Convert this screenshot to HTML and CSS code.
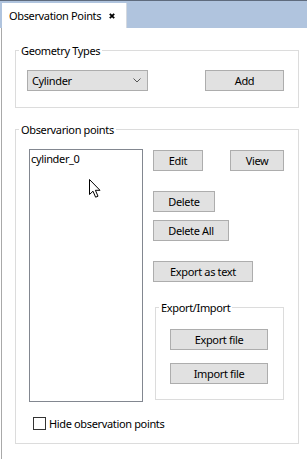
FILE: index.html
```html
<html lang="en">
  <head>
    <meta charset="UTF-8" />
    <meta name="viewport" content="width=device-width, initial-scale=1.0" />
    <title>Observation Points</title>
    <link rel="stylesheet" href="styles.css">
  </head>
  <body>
    <div class="tabbar">
      <div class="tab">
        <span class="tab-label">Observation Points</span>
        <svg class="tab-close" width="6" height="6" viewBox="0 0 6 6">
          <path d="M0.8 0.8 L5.2 5.2 M5.2 0.8 L0.8 5.2" stroke="#000" stroke-width="1.8" />
        </svg>
      </div>
    </div>
    <div class="panel">
      <div class="group geometry">
        <span class="group-title">Geometry Types</span>
        <div class="geometry-row">
          <div class="combo">
            <span>Cylinder</span>
            <svg width="8" height="5" viewBox="0 0 8 5">
              <path d="M0.5 0.5 L4 4 L7.5 0.5" fill="none" stroke="#555" stroke-width="1" />
            </svg>
          </div>
          <button class="btn btn-add">Add</button>
        </div>
      </div>

      <div class="group points">
        <span class="group-title">Observarion points</span>
        <div class="points-body">
          <div class="list">
            <div class="list-item">cylinder_0</div>
          </div>
          <div class="actions">
            <div class="action-row">
              <button class="btn btn-edit">Edit</button>
              <button class="btn btn-view">View</button>
            </div>
            <button class="btn btn-delete">Delete</button>
            <button class="btn btn-delete-all">Delete All</button>
            <button class="btn btn-export-text">Export as text</button>
            <div class="group io">
              <span class="group-title">Export/Import</span>
              <button class="btn btn-file btn-export-file">Export file</button>
              <button class="btn btn-file btn-import-file">Import file</button>
            </div>
          </div>
        </div>
        <label class="check-row">
          <span class="checkbox"></span>
          <span>Hide observation points</span>
        </label>
      </div>
    </div>

    <svg class="cursor" width="13" height="20" viewBox="0 0 13 20">
      <path d="M0.5 0.5 L0.5 15.5 L4 12.2 L6.6 18.2 L9 17.2 L6.4 11.3 L11 11.3 Z" fill="#fff" stroke="#000" stroke-width="1" stroke-linejoin="miter" />
    </svg>
  </body>
</html>
```

FILE: styles.css
```css
body {
  margin: 0;
  width: 307px;
  height: 459px;
  overflow: hidden;
  background: #fff;
  font-family: "Segoe UI", "Noto Sans", sans-serif;
  font-size: 11px;
  letter-spacing: -0.35px;
  color: #000;
  position: relative;
}

.tabbar {
  display: flex;
  height: 28px;
  padding-top: 2px;
  box-sizing: border-box;
  background: #b0c4de;
  border-top: 1px solid #5f6b7d;
}

.tab {
  display: flex;
  align-items: center;
  width: 125px;
  margin-left: 2px;
  padding-left: 7px;
  box-sizing: border-box;
  background: #fff;
  border-right: 1px solid #d4d9e0;
}

.tab-label {
  line-height: 15px;
}

.tab-close {
  margin-left: 8px;
}

.panel {
  margin-left: 1px;
  height: 431px;
  border-left: 1px solid #a9a9a9;
  padding-top: 22px;
  box-sizing: border-box;
}

.group {
  border: 1px solid #dcdcdc;
}

.group-title {
  display: block;
  width: max-content;
  margin: -8px 0 0 3px;
  padding: 0 2px;
  line-height: 15px;
  background: #fff;
}

.geometry,
.points {
  width: 284px;
  margin-left: 13px;
  box-sizing: border-box;
}

.geometry-row {
  display: flex;
  justify-content: space-between;
  margin: 12px 14px 16px 11px;
}

.combo {
  display: flex;
  align-items: center;
  justify-content: space-between;
  width: 121px;
  height: 21px;
  padding: 0 6px 0 4px;
  box-sizing: border-box;
  background: #e1e1e1;
  border: 1px solid #adadad;
}

.btn {
  display: block;
  height: 21px;
  padding: 0;
  box-sizing: border-box;
  background: #e1e1e1;
  border: 1px solid #adadad;
  font-family: inherit;
  font-size: 11px;
  letter-spacing: -0.35px;
  color: #000;
  text-align: center;
}

.btn-add {
  width: 79px;
}

.points {
  margin-top: 21px;
}

.points-body {
  display: flex;
  align-items: flex-start;
  margin-top: 12px;
}

.list {
  width: 114px;
  height: 253px;
  margin-left: 13px;
  border: 1px solid #828790;
  box-sizing: border-box;
  padding: 1px 1px;
}

.list-item {
  line-height: 15px;
}

.actions {
  margin-left: 10px;
  padding-top: 1px;
}

.action-row {
  display: flex;
  gap: 27px;
}

.btn-edit {
  width: 50px;
}

.btn-view {
  width: 54px;
}

.btn-delete {
  width: 62px;
  margin-top: 20px;
}

.btn-delete-all {
  width: 76px;
  margin-top: 8px;
}

.btn-export-text {
  width: 100px;
  margin-top: 20px;
}

.io {
  width: 129px;
  margin: 25px 0 0 2px;
  box-sizing: border-box;
  padding-bottom: 15px;
}

.btn-file {
  width: 98px;
  margin-left: 14px;
}

.btn-export-file {
  margin-top: 14px;
}

.btn-import-file {
  margin-top: 13px;
}

.check-row {
  display: flex;
  align-items: center;
  gap: 3px;
  margin: 14px 0 12px 17px;
  line-height: 15px;
}

.checkbox {
  width: 13px;
  height: 13px;
  box-sizing: border-box;
  border: 1px solid #333;
  background: #fff;
}

.cursor {
  position: absolute;
  left: 89px;
  top: 179px;
}
```
